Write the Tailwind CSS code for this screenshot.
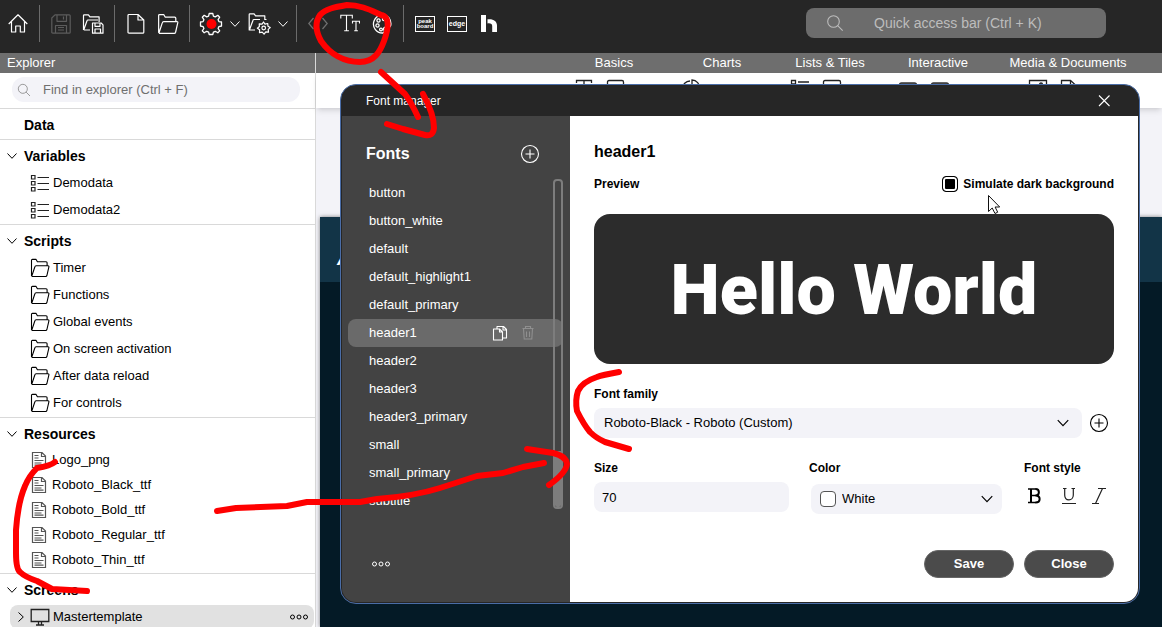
<!DOCTYPE html>
<html lang="en">
<head>
<meta charset="utf-8">
<meta name="viewport" content="width=device-width, initial-scale=1">
<title>Font manager</title>
<script src="https://cdn.jsdelivr.net/npm/@tailwindcss/browser@4"></script>
</head>
<body class="relative flex h-screen flex-col overflow-hidden bg-white font-['Liberation_Sans',Arial,sans-serif] text-[13px] leading-4 text-black">

<svg class="hidden" aria-hidden="true">
  <defs>
    <symbol id="down" viewBox="0 0 12 12"><path d="M1.500 3.500 6 8.300l4.500-4.800" fill="none" stroke="currentColor" stroke-width="1"/></symbol>
    <symbol id="folder" viewBox="0 0 20 20"><path d="M1.500 18V2.300c0-.6.4-.9.900-.9h3.700l1.300 2.300h8.700c.7 0 1 .4 1 1v3M1.700 18.400 4.800 9c.2-.8.600-1.200 1.300-1.200h12c.6 0 .9.400.8 1l-2 8.700c-.2.700-.6 1-1.200 1H1.700" fill="none" stroke="currentColor" stroke-width="1.100" stroke-linejoin="round"/></symbol>
    <symbol id="list" viewBox="0 0 20 20"><path d="M1.500 2.500h3.500V6H1.500zM1.500 8.500h3.500V12H1.500zM1.500 14.500h3.500V18H1.500zM7.500 4.500H19M7.500 10.500H19M7.500 16.500H19" fill="none" stroke="#222" stroke-width="1.200"/></symbol>
    <symbol id="doc" viewBox="0 0 16 18"><path d="M1.500 1.500h9.500l3.500 3.500v11.500h-13zM10.500 1.500v4h4M3.500 4.500h4M3.500 7h4M3.500 9.500h9M3.500 12h7M3.500 14.200h9" fill="none" stroke="#555" stroke-width="1.200"/></symbol>
    <symbol id="plus" viewBox="0 0 20 20"><circle cx="10" cy="10" r="8.500" fill="none" stroke="currentColor" stroke-width="1.100"/><path d="M10 5.500v9M5.500 10h9" stroke="currentColor" stroke-width="1.100"/></symbol>
    <symbol id="glass" viewBox="0 0 18 18"><circle cx="7.500" cy="7.500" r="5.800" fill="none" stroke="currentColor" stroke-width="1.100"/><path d="m11.700 11.700 5 5" stroke="currentColor" stroke-width="1.100"/></symbol>
    <symbol id="dots" viewBox="0 0 20 6"><g fill="none" stroke="currentColor" stroke-width="1"><circle cx="3.500" cy="3" r="2"/><circle cx="10" cy="3" r="2"/><circle cx="16.500" cy="3" r="2"/></g></symbol>
  </defs>
</svg>

<header class="flex h-[53px] shrink-0 items-start bg-[#262626] text-white">
  <nav class="flex items-center pt-[5px] pl-[2px]" aria-label="Toolbar">
    <button aria-label="Home" class="grid w-8 place-items-center"><svg class="size-5" viewBox="0 0 20 20" fill="none" stroke="currentColor" stroke-width="1.200" stroke-linejoin="round"><path d="M.7 10 10 .8l9.300 9.200M3.500 7.500V18h4.200v-6h4.600v6h4.200V7.500"/></svg></button>
    <span class="mx-[5px] h-[37px] w-px bg-[#6b6b6b]"></span>
    <button aria-label="Save" class="grid w-8 place-items-center text-[#5c5c5c]"><svg class="size-5" viewBox="0 0 20 20" fill="none" stroke="currentColor" stroke-width="1.200" stroke-linejoin="round"><path d="M4 .8h14.200c.6 0 1 .4 1 1v16.400c0 .6-.4 1-1 1H1.800c-.6 0-1-.4-1-1V4zM6 .8v6.500h9.500V.8M12.500 2.500v3M4.500 19v-7.500h11V19M7 13.500h6M7 16h6"/></svg></button>
    <button aria-label="Save as" class="grid w-8 place-items-center"><svg class="h-5 w-[22px]" viewBox="0 0 22 20" fill="none" stroke="currentColor" stroke-width="1.200" stroke-linejoin="round"><path d="M1.500 16V1.500c0-.4.300-.7.700-.7h4.200l1.500 2h9.200V8M1.700 16 5 6.700c.1-.4.500-.7 1-.7h10M1.700 16H8M12 9h7.200l1.800 1.800v8.400H10.500V9zM13 9v3.300h5V9M13 19v-4h5.500v4"/></svg></button>
    <span class="mx-[5px] h-[37px] w-px bg-[#6b6b6b]"></span>
    <button aria-label="New" class="grid w-8 place-items-center"><svg class="size-5" viewBox="0 0 20 20" fill="none" stroke="currentColor" stroke-width="1.200" stroke-linejoin="round"><path d="M3 .5h9L17.800 6v12.200c0 .6-.4 1-1 1H3c-.6 0-1-.4-1-1V1.500c0-.6.4-1 1-1zM12 .5V6h5.800"/></svg></button>
    <button aria-label="Open" class="grid w-8 place-items-center"><svg class="size-[22px]"><use href="#folder"/></svg></button>
    <span class="mx-[5px] h-[37px] w-px bg-[#6b6b6b]"></span>
    <button aria-label="Build" class="grid w-8 place-items-center"><svg class="size-6" viewBox="0 0 24 24"><path d="M10.200 1.500h3.600l.6 2.600 1.900.8 2.500-1.600 1.900 1.900-1.600 2.500.8 1.900 2.600.4v4l-2.600.6-.8 1.900 1.600 2.400-1.900 1.900-2.500-1.500-1.900.8-.6 2.400h-3.600l-.6-2.400-1.900-.8-2.500 1.500-1.900-1.900 1.600-2.400-.8-1.900-2.600-.6v-4l2.600-.4.800-1.900-1.600-2.500 1.900-1.900 2.500 1.600 1.900-.8z" fill="none" stroke="#fff" stroke-width="1.300" stroke-linejoin="round"/><circle cx="12.500" cy="12" r="5" fill="red"/></svg></button>
    <button aria-label="Build options" class="grid w-4 place-items-center"><svg class="size-3"><use href="#down"/></svg></button>
    <button aria-label="Project settings" class="grid w-8 place-items-center"><svg class="h-[22px] w-6" viewBox="0 0 24 22" fill="none" stroke="currentColor" stroke-width="1.200" stroke-linejoin="round"><path d="M8 17H2.200V1.500c0-.4.300-.7.700-.7h4.200l1.500 2h9.200V7M2.400 17 6 7.200c.1-.4.500-.7 1-.7h6M17.500 6.500h2"/><path d="m16.500 9 1.500 2.200 2.700-.7.300 2.700 2.200 1.400-2 1.800.3 2.700-2.700-.2-1.700 2.300-1.900-2.100-2.700.5.100-2.800-2.200-1.600 2-1.700-.2-2.700 2.800.3z"/><circle cx="16.700" cy="15" r="1.800"/></svg></button>
    <button aria-label="Project settings options" class="grid w-4 place-items-center"><svg class="size-3"><use href="#down"/></svg></button>
    <span class="mx-[5px] h-[37px] w-px bg-[#6b6b6b]"></span>
    <button aria-label="Code" class="grid w-8 place-items-center text-[#707070]"><svg class="size-5" viewBox="0 0 20 20" fill="none" stroke="currentColor" stroke-width="1.200"><path d="M5.500 4 .8 9.500 5.500 15M14.500 4l4.700 5.500-4.700 5.500"/></svg></button>
    <button aria-label="Fonts" class="grid w-8 place-items-center"><svg class="size-5" viewBox="0 0 20 20" fill="none" stroke="currentColor" stroke-width="1.100"><path d="M.8 4.500V1.300h11.500v3.200M6.500 1.300v15.400M4.200 16.700h4.700M12.500 9.500V7.300h7v2.200M16 7.300v9.400M14.200 16.700h3.700"/></svg></button>
    <button aria-label="Colors" class="grid w-8 place-items-center"><svg class="size-5" viewBox="0 0 20 20" fill="none" stroke="currentColor" stroke-width="1.300"><path d="M17 3.800A9 9 0 1 0 11 19c2-.3 1.300-2.500.8-3.500-.6-1.500.5-2.500 2-2.300 2 .4 4.500.3 5-2.200.3-2.500-.3-5.300-1.800-7.200z"/><circle cx="6.500" cy="6.500" r="1.600"/><circle cx="5.500" cy="11.500" r="1.600"/><circle cx="9" cy="15.500" r="1.400"/><circle cx="12" cy="5" r="1.600"/></svg></button>
    <span class="mx-[5px] h-[37px] w-px bg-[#6b6b6b]"></span>
    <button aria-label="Peakboard" class="grid w-8 place-items-center"><span class="grid h-4 w-5 place-items-center border border-white text-[6px] leading-[5px] font-bold"><span>peak<br>board</span></span></button>
    <button aria-label="Edge" class="grid w-8 place-items-center"><span class="grid h-4 w-5 place-items-center border border-white text-[7px] leading-[6px] font-bold">edge</span></button>
    <button aria-label="Hub" class="grid w-8 place-items-center"><svg class="h-[18px] w-4" viewBox="0 0 16 18"><path d="M0 0h5v17H0zM6.500 8.500V4.300c5.500-.8 9.500 1.700 9.500 6.200V17h-4.800v-6c0-2-1.700-3-4.700-2.500z" fill="#fff"/></svg></button>
  </nav>
  <label class="mt-2 mr-14 ml-auto flex h-[30px] w-[300px] items-center rounded-lg bg-[#6c6c6c] text-[#bdbdbd]">
    <svg class="ml-5 size-[18px]"><use href="#glass"/></svg>
    <input type="text" aria-label="Quick access bar" placeholder="Quick access bar (Ctrl + K)" class="ml-[30px] min-w-0 flex-1 bg-transparent text-sm outline-none placeholder:text-[#bdbdbd]">
  </label>
</header>

<div class="flex min-h-0 flex-1">
  <aside class="flex w-[316px] shrink-0 flex-col border-r border-[#d9d9d9]">
    <h2 class="h-5 shrink-0 bg-[#6e6e6e] pl-[7px] leading-5 text-white">Explorer</h2>
    <div class="h-9 shrink-0 border-b border-[#d9d9d9] pt-1 pr-[15px] pl-3">
      <label class="flex h-[25px] items-center rounded-xl bg-[#f3f3f8] text-[#8a8a8a]">
        <svg class="ml-[5px] size-[14px]"><use href="#glass"/></svg>
        <input type="text" aria-label="Find in explorer" placeholder="Find in explorer (Ctrl + F)" class="ml-3 min-w-0 flex-1 bg-transparent outline-none placeholder:text-[#6f6f6f]">
      </label>
    </div>
    <h3 class="h-[31px] shrink-0 border-b border-[#d9d9d9] pt-px pl-6 text-sm leading-[30px] font-bold">Data</h3>

    <section class="shrink-0 border-b border-[#d9d9d9]">
      <h3 class="flex h-[30px] items-center gap-[6px] pt-[2px] pl-[6px] text-sm font-bold"><svg class="size-3"><use href="#down"/></svg>Variables</h3>
      <ul class="leading-[26px]">
        <li class="flex h-[27px] items-start gap-[3px] pl-[30px]"><svg class="mt-[3px] size-5"><use href="#list"/></svg>Demodata</li>
        <li class="flex h-[27px] items-start gap-[3px] pl-[30px]"><svg class="mt-[3px] size-5"><use href="#list"/></svg>Demodata2</li>
      </ul>
    </section>

    <section class="shrink-0 border-b border-[#d9d9d9]">
      <h3 class="flex h-[30px] items-center gap-[6px] pt-[2px] pl-[6px] text-sm font-bold"><svg class="size-3"><use href="#down"/></svg>Scripts</h3>
      <ul class="leading-[26px]">
        <li class="flex h-[27px] items-start gap-[3px] pl-[30px]"><svg class="mt-[3px] size-5"><use href="#folder"/></svg>Timer</li>
        <li class="flex h-[27px] items-start gap-[3px] pl-[30px]"><svg class="mt-[3px] size-5"><use href="#folder"/></svg>Functions</li>
        <li class="flex h-[27px] items-start gap-[3px] pl-[30px]"><svg class="mt-[3px] size-5"><use href="#folder"/></svg>Global events</li>
        <li class="flex h-[27px] items-start gap-[3px] pl-[30px]"><svg class="mt-[3px] size-5"><use href="#folder"/></svg>On screen activation</li>
        <li class="flex h-[27px] items-start gap-[3px] pl-[30px]"><svg class="mt-[3px] size-5"><use href="#folder"/></svg>After data reload</li>
        <li class="flex h-[27px] items-start gap-[3px] pl-[30px]"><svg class="mt-[3px] size-5"><use href="#folder"/></svg>For controls</li>
      </ul>
    </section>

    <section class="shrink-0 border-b border-[#d9d9d9]">
      <h3 class="flex h-[30px] items-center gap-[6px] pt-[2px] pl-[6px] text-sm font-bold"><svg class="size-3"><use href="#down"/></svg>Resources</h3>
      <ul class="leading-6">
        <li class="flex h-[25px] items-start gap-[5px] pl-[31px]"><svg class="mt-[3px] h-[18px] w-4"><use href="#doc"/></svg>Logo_png</li>
        <li class="flex h-[25px] items-start gap-[5px] pl-[31px]"><svg class="mt-[3px] h-[18px] w-4"><use href="#doc"/></svg>Roboto_Black_ttf</li>
        <li class="flex h-[25px] items-start gap-[5px] pl-[31px]"><svg class="mt-[3px] h-[18px] w-4"><use href="#doc"/></svg>Roboto_Bold_ttf</li>
        <li class="flex h-[25px] items-start gap-[5px] pl-[31px]"><svg class="mt-[3px] h-[18px] w-4"><use href="#doc"/></svg>Roboto_Regular_ttf</li>
        <li class="flex h-[25px] items-start gap-[5px] pl-[31px]"><svg class="mt-[3px] h-[18px] w-4"><use href="#doc"/></svg>Roboto_Thin_ttf</li>
      </ul>
    </section>

    <section class="shrink-0">
      <h3 class="flex h-[30px] items-center gap-[6px] pt-[2px] pl-[6px] text-sm font-bold"><svg class="size-3"><use href="#down"/></svg>Screens</h3>
      <div class="mt-px mr-px ml-[10px] flex h-6 items-center rounded-lg bg-[#e1e1e1] pl-[5px]">
        <svg class="size-3 -rotate-90"><use href="#down"/></svg>
        <svg class="ml-[3px] size-5" viewBox="0 0 20 20" fill="none" stroke="#222" stroke-width="1.300"><path d="M1.200 2.500h17.600v12H1.200zM8.500 14.500v3.300M11.500 14.500v3.300M6 18h8"/></svg>
        <span class="ml-[3px]">Mastertemplate</span>
        <button aria-label="More" class="mr-[5px] ml-auto"><svg class="h-[6px] w-5"><use href="#dots"/></svg></button>
      </div>
    </section>
  </aside>

  <main class="flex min-w-0 flex-1 flex-col bg-[#f3f3f8]">
    <nav class="flex h-5 shrink-0 justify-end bg-[#6e6e6e] pr-[18px] text-white" aria-label="Control groups">
      <button class="w-[108px]">Basics</button>
      <button class="w-[108px]">Charts</button>
      <button class="w-[108px]">Lists &amp; Tiles</button>
      <button class="w-[108px]">Interactive</button>
      <button class="w-[152px]">Media &amp; Documents</button>
    </nav>
    <div class="flex h-[35px] shrink-0 justify-end overflow-hidden bg-white pt-[6px] pr-[18px] shadow-md">
      <div class="flex w-[108px] pl-2"><svg class="h-[18px] w-16" viewBox="0 0 64 18" fill="none" stroke="#222" stroke-width="1.300"><path d="M8.500 4V1.500h15V4M16 1.500V16M39.500 16V3c0-1 .5-1.500 1.500-1.500h13c1 0 1.500.5 1.500 1.500v13z"/></svg></div>
      <div class="flex w-[108px] pl-2"><svg class="h-[18px] w-8" viewBox="0 0 32 18" fill="none" stroke="#222" stroke-width="1.300"><path d="M14 2a8 8 0 1 0 8 10M16 1v9h8a8 9 0 0 0-8-9z"/></svg></div>
      <div class="flex w-[108px] pl-2"><svg class="h-[18px] w-16" viewBox="0 0 64 18" fill="none" stroke="#222" stroke-width="1.300"><path d="M7.500 1.500h4V5h-4zM14 3h11M39.500 16V3c0-1 .5-1.500 1.500-1.500h14c1 0 1.500.5 1.500 1.500v13z"/></svg></div>
      <div class="flex w-[108px] pl-2"><svg class="h-[18px] w-16" viewBox="0 0 64 18" fill="#777" stroke="#333" stroke-width="1.300"><rect x="7.500" y="4" width="17" height="10" rx="2"/><rect x="39.500" y="4" width="17" height="10" rx="2"/></svg></div>
      <div class="flex w-[152px] pl-[30px]"><svg class="h-[18px] w-16" viewBox="0 0 64 18" fill="none" stroke="#222" stroke-width="1.300"><path d="M7.500 16V1.500h17V16zM39.500 16V1.500h9l5 4.500v10M48.500 1.500V6h5"/><circle cx="19" cy="5.500" r="1.500"/></svg></div>
    </div>
    <div class="mt-[109px] ml-1 flex-1 bg-[#041a26] shadow-[0_0_4px_rgba(0,0,0,0.5)]">
      <div class="flex h-[65px] items-center bg-[#123447] pt-4 pl-[17px] text-xl font-bold text-white italic">A</div>
    </div>
  </main>
</div>

<!-- Font manager dialog -->
<div role="dialog" aria-label="Font manager" class="absolute top-[84px] left-[340px] w-[800px] overflow-hidden rounded-2xl border border-[#4a6da7] bg-[#262626] p-px">
  <div class="flex h-[30px] items-center justify-between pr-[26px] pl-6 text-xs text-white">
    <span>Font manager</span>
    <button aria-label="Close dialog"><svg class="block size-4" viewBox="0 0 16 16" stroke="currentColor" stroke-width="1.100"><path d="m3 2.500 10.500 10.500M13.500 2.500 3 13"/></svg></button>
  </div>
  <div class="flex overflow-hidden rounded-b-[14px]">
    <div class="flex w-[228px] shrink-0 flex-col bg-[#434343] text-white">
      <div class="flex h-[63px] items-center justify-between pt-3 pr-[30px] pl-6">
        <h2 class="text-base font-bold">Fonts</h2>
        <button aria-label="Add font style"><svg class="block size-5"><use href="#plus"/></svg></button>
      </div>
      <div class="relative mr-[7px] ml-[6px] h-[330px] overflow-hidden leading-7">
        <ul>
          <li class="px-[21px]">button</li>
          <li class="px-[21px]">button_white</li>
          <li class="px-[21px]">default</li>
          <li class="px-[21px]">default_highlight1</li>
          <li class="px-[21px]">default_primary</li>
          <li class="flex items-center rounded-lg bg-[#6a6a6a] pr-[27px] pl-[21px]">header1
            <button aria-label="Duplicate" class="ml-auto"><svg class="block size-4" viewBox="0 0 16 16" fill="none" stroke="currentColor" stroke-width="1.100" stroke-linejoin="round"><path d="M1.500 4h6L10.500 7v8h-9zM7.500 4v3h3M5 4V1.500h6.500L14.500 4.500v8.500h-4M11 1.500v3.500h3.500"/></svg></button>
            <button aria-label="Delete" class="ml-3 text-[#8f8f8f]"><svg class="block size-4" viewBox="0 0 16 16" fill="none" stroke="currentColor" stroke-width="1.100"><path d="M2.500 3.500h11M5.500 3.500v-2h5v2M3.500 3.500l.7 10.500h7.600l.7-10.500M6.500 6.500v5.500M9.500 6.500v5.500"/></svg></button>
          </li>
          <li class="px-[21px]">header2</li>
          <li class="px-[21px]">header3</li>
          <li class="px-[21px]">header3_primary</li>
          <li class="px-[21px]">small</li>
          <li class="px-[21px]">small_primary</li>
          <li class="px-[21px]">subtitle</li>
        </ul>
        <div class="absolute top-0 right-0 flex h-full w-[10px] flex-col justify-end overflow-hidden rounded-sm border-2 border-[#7d7d7d]"><span class="h-14 bg-[#7d7d7d]"></span></div>
      </div>
      <button aria-label="More" class="mt-[52px] ml-[29px] w-5"><svg class="block h-[6px] w-5"><use href="#dots"/></svg></button>
    </div>

    <form class="min-w-0 flex-1 bg-white px-6 pt-6 pb-6">
      <h2 class="text-base leading-6 font-bold">header1</h2>
      <div class="mt-3 flex h-4 items-center justify-between text-xs font-bold">
        <span>Preview</span>
        <label class="flex items-center gap-[5px]"><input type="checkbox" checked class="size-4 appearance-none rounded-sm border border-black bg-white shadow-[inset_0_0_0_2px_white] checked:bg-black">Simulate dark background</label>
      </div>
      <div class="mt-[22px] grid h-[150px] place-items-center rounded-2xl bg-[#2c2c2c] pt-[2px] font-[Roboto,sans-serif] text-[70px] leading-none font-black text-white">Hello World</div>
      <label for="family" class="mt-5 block text-xs leading-5 font-bold">Font family</label>
      <div class="mt-1 flex items-center gap-[7px]">
        <div class="relative flex-1">
          <select id="family" class="block h-[30px] w-full appearance-none rounded-lg bg-[#f3f3f8] pl-[10px]"><option>Roboto-Black - Roboto (Custom)</option></select>
          <svg class="pointer-events-none absolute top-2 right-3 size-[14px]"><use href="#down"/></svg>
        </div>
        <button type="button" aria-label="Add font family" class="mr-[5px]"><svg class="block size-5"><use href="#plus"/></svg></button>
      </div>
      <div class="mt-5 grid grid-cols-[1fr_1fr_90px] gap-5">
        <div>
          <label for="size" class="block text-xs leading-5 font-bold">Size</label>
          <input id="size" type="text" value="70" class="mt-1 h-[30px] w-full rounded-lg bg-[#f3f3f8] pl-2">
        </div>
        <div>
          <label for="color" class="block text-xs leading-5 font-bold">Color</label>
          <div class="relative mx-[2px] mt-[6px]">
            <select id="color" class="block h-[30px] w-full appearance-none rounded-lg bg-[#f3f3f8] pl-[31px]"><option>White</option></select>
            <span class="pointer-events-none absolute top-[7px] left-[9px] size-4 rounded-sm border border-[#555] bg-white"></span>
            <svg class="pointer-events-none absolute top-2 right-2 size-[14px]"><use href="#down"/></svg>
          </div>
        </div>
        <div>
          <span class="block text-xs leading-5 font-bold">Font style</span>
          <div class="mt-2 flex pl-[3px]">
            <button type="button" aria-label="Bold"><svg class="block h-5 w-4" viewBox="0 0 16 20" fill="none" stroke="#000"><path d="M1 3h8M1 16.500h8M4 9.500h5" stroke-width="1.500"/><path d="M4 3v13.500M8.500 3c4.500 0 4.500 6.500 0 6.500 5.500 0 5.500 7 0 7" stroke-width="2"/></svg></button>
            <button type="button" aria-label="Underline" class="ml-[18px]"><svg class="block h-5 w-4" viewBox="0 0 16 20" fill="none" stroke="#222" stroke-width="1.200"><path d="M2 2.500h3.500M10.500 2.500H14M3.700 2.500V9c0 6.500 8.600 6.500 8.600 0V2.500M1 17.500h14"/></svg></button>
            <button type="button" aria-label="Italic" class="ml-[14px]"><svg class="block h-5 w-4" viewBox="0 0 16 20" fill="none" stroke="#222" stroke-width="1.200"><path d="M7 2.500h8M1 17.500h7M11.500 2.500l-7 15"/></svg></button>
          </div>
        </div>
      </div>
      <div class="mt-9 flex justify-end gap-[10px] font-bold text-white">
        <button type="button" class="h-7 w-[90px] rounded-full border border-[#666] bg-[#4b4b4b]">Save</button>
        <button type="button" class="h-7 w-[90px] rounded-full border border-[#666] bg-[#4b4b4b]">Close</button>
      </div>
    </form>
  </div>
</div>

<!-- Mouse pointer and hand-drawn markup -->
<svg class="pointer-events-none absolute top-0 left-0 h-[627px] w-[1162px]" viewBox="0 0 1162 627" aria-hidden="true">
  <path d="M988.500 195.500v16l3.700-3.500 2.800 5.500 2.700-1.300-2.600-5.200h4.600z" fill="#fff" stroke="#111"/>
  <g fill="none" stroke="red" stroke-width="6" stroke-linecap="round" stroke-linejoin="round">
    <path d="M384 16C372 11 362 5 347 5 335 7 325 9 320 15 315 22 315 30 321 41 330 54 344 62 360 62 374 62 380 52 384 41 388 30 390 20 384 16"/>
    <path d="M381 72 405 94Q411 102 418 117M423 94Q434 114 434 128 433 137 425 135L403 129 387 124"/>
    <path d="M55 462Q50 466 37 468 29 476 25 486 18 502 16 530L16 553Q16 569 20 572 25 577 37 581L52 589 87 591"/>
    <path d="M217 511 236 508 287 506 307 502H360L377 499Q415 496 440 488L477 476 503 473 523 467 544 463M527 449 553 453Q566 456 567 464 566 473 549 485"/>
    <path d="M619 372Q602 375 597 377 582 382 578 391 575 400 577 411 584 425 590 432 596 438 605 442L629 449"/>
  </g>
</svg>
</body>
</html>
